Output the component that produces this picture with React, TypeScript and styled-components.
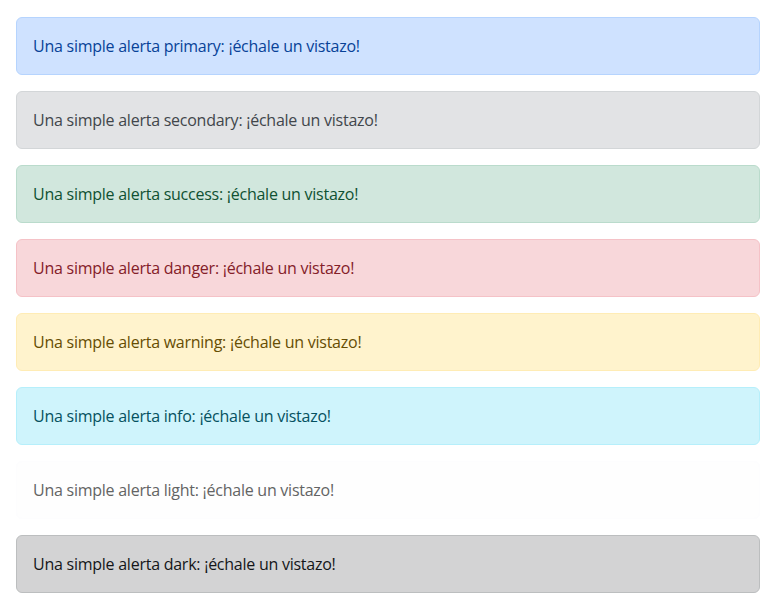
import styled, { createGlobalStyle } from 'styled-components';

const GlobalStyle = createGlobalStyle`
  * {
    box-sizing: border-box;
  }
  body {
    margin: 0;
    background: #fff;
    font-family: 'Open Sans', 'Noto Sans', sans-serif;
    font-size: 16px;
    line-height: 1.5;
    color: #212529;
  }
`;

type Variant =
  | 'primary'
  | 'secondary'
  | 'success'
  | 'danger'
  | 'warning'
  | 'info'
  | 'light'
  | 'dark';

const palette: Record<Variant, { color: string; bg: string; border: string }> = {
  primary: { color: '#084298', bg: '#cfe2ff', border: '#b6d4fe' },
  secondary: { color: '#41464b', bg: '#e2e3e5', border: '#d3d6d8' },
  success: { color: '#0f5132', bg: '#d1e7dd', border: '#badbcc' },
  danger: { color: '#842029', bg: '#f8d7da', border: '#f5c2c7' },
  warning: { color: '#664d03', bg: '#fff3cd', border: '#ffecb5' },
  info: { color: '#055160', bg: '#cff4fc', border: '#b6effb' },
  light: { color: '#636464', bg: '#fefefe', border: '#fdfdfe' },
  dark: { color: '#141619', bg: '#d3d3d4', border: '#bcbebf' },
};

const variants: Variant[] = [
  'primary',
  'secondary',
  'success',
  'danger',
  'warning',
  'info',
  'light',
  'dark',
];

export default function App() {
  return (
    <>
      <GlobalStyle />
      <Container>
        {variants.map((v) => (
          <Alert key={v} $variant={v} role="alert">
            Una simple alerta {v}: ¡échale un vistazo!
          </Alert>
        ))}
      </Container>
    </>
  );
}

const Container = styled.div`
  padding: 17px 17px 0 16px;
  display: flex;
  flex-direction: column;
  gap: 16px;
`;

const Alert = styled.div<{ $variant: Variant }>`
  padding: 16px;
  border: 1px solid ${(p) => palette[p.$variant].border};
  border-radius: 6px;
  background-color: ${(p) => palette[p.$variant].bg};
  color: ${(p) => palette[p.$variant].color};
  letter-spacing: -0.25px;
`;
